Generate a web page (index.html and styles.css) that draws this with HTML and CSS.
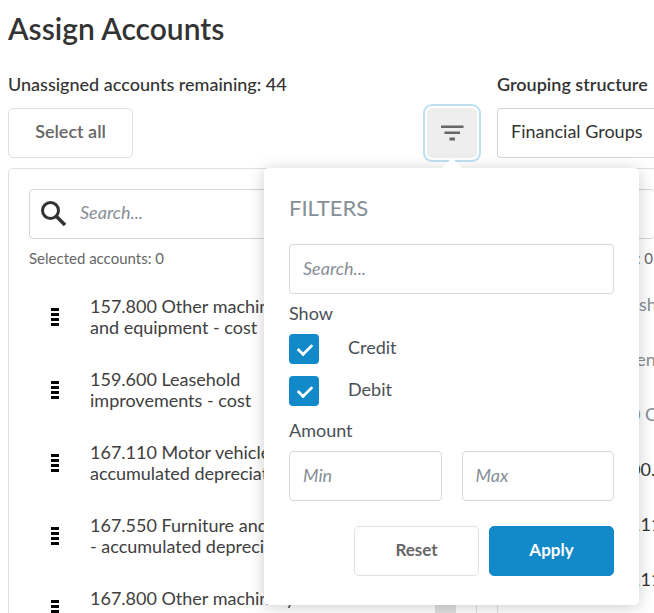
FILE: index.html
```html
<!DOCTYPE html>
<html lang="en">
<head>
<meta charset="utf-8">
<title>Assign Accounts</title>
<link rel="stylesheet" href="styles.css">
</head>
<body>
<main class="page">
  <h1 class="title">Assign Accounts</h1>
  <div class="columns">
    <section class="column">
      <h2 class="heading">Unassigned accounts remaining: 44</h2>
      <div class="toolbar">
        <button type="button" class="button">Select all</button>
        <div class="filter">
          <button type="button" class="filter-toggle" aria-label="Filters" aria-expanded="true">
            <svg width="24" height="24" viewBox="0 0 24 24" aria-hidden="true"><path fill="#666" d="M1 4.500h22.500v2.500H1zM4.500 10.500h15.500v2.500H4.500zM9.500 16.500h5.500v3H9.500z"/></svg>
          </button>
          <form class="popover">
            <h2 class="popover-title">FILTERS</h2>
            <input class="input" type="text" placeholder="Search..." aria-label="Search filters">
            <fieldset class="group">
              <legend class="label">Show</legend>
              <label class="check"><input class="checkbox" type="checkbox" checked><span class="check-text">Credit</span></label>
              <label class="check"><input class="checkbox" type="checkbox" checked><span class="check-text">Debit</span></label>
            </fieldset>
            <fieldset class="group">
              <legend class="label">Amount</legend>
              <div class="range">
                <input class="input" type="text" placeholder="Min" aria-label="Minimum amount">
                <input class="input" type="text" placeholder="Max" aria-label="Maximum amount">
              </div>
            </fieldset>
            <div class="actions">
              <button type="reset" class="button strong">Reset</button>
              <button type="submit" class="button strong primary">Apply</button>
            </div>
          </form>
        </div>
      </div>
      <div class="panel">
        <div class="search">
          <svg class="search-icon" width="28" height="28" viewBox="0 0 28 28" fill="none" stroke="#333" aria-hidden="true"><circle cx="10.500" cy="10.500" r="8" stroke-width="3"/><path d="M16 16L25 25" stroke-width="3.500"/></svg>
          <input class="search-input" type="text" placeholder="Search..." aria-label="Search accounts">
        </div>
        <p class="selected">Selected accounts: 0</p>
        <ul class="accounts">
          <li class="account"><span class="grip"></span><span class="name">157.800 Other machinery<br>and equipment - cost</span></li>
          <li class="account"><span class="grip"></span><span class="name">159.600 Leasehold<br>improvements - cost</span></li>
          <li class="account"><span class="grip"></span><span class="name">167.110 Motor vehicles -<br>accumulated depreciation</span></li>
          <li class="account"><span class="grip"></span><span class="name">167.550 Furniture and<br>- accumulated depreciation</span></li>
          <li class="account"><span class="grip"></span><span class="name">167.800 Other machinery<br>and equip. - accumulated</span><span class="amount">1,000.00</span><span class="tag"></span></li>
        </ul>
      </div>
    </section>
    <section class="column">
      <h2 class="heading"><label for="structure">Grouping structure</label></h2>
      <div class="toolbar">
        <select class="select" id="structure"><option>Financial Groups</option></select>
      </div>
      <div class="panel open">
        <div class="search open"></div>
        <p class="selected">Selected accounts: 0</p>
        <ul class="groups">
          <li class="muted">ash</li>
          <li class="muted">rent</li>
          <li class="muted">0 C</li>
          <li>00.</li>
          <li>111</li>
          <li>111</li>
        </ul>
      </div>
    </section>
  </div>
</main>
</body>
</html>
```
FILE: styles.css
```css
* { box-sizing: border-box; }

body {
  margin: 0;
  height: 100vh;
  overflow: hidden;
  background: #fff;
  color: #333;
  font: 400 18px/21px Lato, "Liberation Sans", sans-serif;
}

h1, h2, p, ul, fieldset { margin: 0; padding: 0; border: 0; }
h1, h2 { font-weight: 600; }
ul { list-style: none; }
button, input, select { font: inherit; color: inherit; }

.page { padding: 8px 0 0 8px; }
.title { font-size: 30px; line-height: 40px; }

.columns {
  display: grid;
  grid-template-columns: minmax(0, 469fr) minmax(0, 157fr);
  column-gap: 20px;
  margin-top: 24px;
}
.heading { font-size: 18px; font-weight: 500; line-height: 24px; white-space: nowrap; }
.column + .column .heading { font-weight: 600; }
.toolbar {
  display: flex;
  justify-content: space-between;
  margin: 12px 0 10px;
}

.button {
  width: 125px;
  height: 50px;
  padding: 0 0 4px;
  border: 1px solid #e0e0e0;
  border-radius: 5px;
  background: #fff;
  color: #666;
  font-weight: 600;
}
.button.strong { font-size: 17px; font-weight: 700; }
.button.primary {
  border-color: #1289c9;
  background: #1289c9;
  color: #fff;
}

.filter { position: relative; }
.filter-toggle {
  display: flex;
  align-items: center;
  justify-content: center;
  width: 50px;
  height: 50px;
  padding: 0;
  border: 0;
  border-radius: 5px;
  background: #eee;
  box-shadow: 0 0 0 2px #fff, 0 0 0 4px #bfe0f3;
}

.popover {
  position: absolute;
  z-index: 1;
  top: 60px;
  right: -162px;
  width: 375px;
  padding: 24px 25px 29px;
  border-radius: 5px;
  background: #fff;
  box-shadow: 0 2px 16px rgba(0, 0, 0, .2);
}
.popover::before {
  content: "";
  position: absolute;
  top: -10px;
  left: 178px;
  border: 10px solid transparent;
  border-top: 0;
  border-bottom-color: #fff;
}
.popover-title {
  margin-bottom: 20px;
  color: #868e96;
  font-size: 22px;
  font-weight: 400;
  line-height: 32px;
}
.input {
  display: block;
  width: 100%;
  min-width: 0;
  height: 50px;
  padding: 0 13px 3px;
  border: 1px solid #d5dae0;
  border-radius: 4px;
  background: #fff;
}
::placeholder { color: #868e96; font-style: italic; opacity: 1; }

.label { line-height: 24px; color: #495057; }
.group .label { padding: 7px 0 9px; }
.group + .group .label { padding: 0 0 9px; }
.check {
  display: flex;
  align-items: center;
  gap: 29px;
  margin-bottom: 12px;
  color: #495057;
}
.check-text { padding-bottom: 4px; }
.checkbox {
  appearance: none;
  width: 30px;
  height: 30px;
  margin: 0;
  border-radius: 4px;
  background: #1289c9;
}
.checkbox::before {
  content: "";
  display: block;
  width: 14px;
  height: 8px;
  margin: 9px 8px;
  border: solid #fff;
  border-width: 0 0 3px 3px;
  transform: rotate(-45deg) scale(.9);
}
.range { display: grid; grid-template-columns: 1fr 1fr; gap: 20px; }
.actions {
  display: flex;
  justify-content: flex-end;
  gap: 10px;
  margin-top: 25px;
}

.panel {
  padding: 20px;
  border: 1px solid #e0e0e0;
  border-radius: 5px;
}
.panel.open { padding-right: 0; }
.open { border-right: 0; border-radius: 5px 0 0 5px; }
.search {
  display: flex;
  align-items: center;
  height: 50px;
  padding-left: 10px;
  border: 1px solid #d0d5da;
  border-radius: 4px;
}
.search.open { border-right: 0; }
.search-input {
  flex: 1;
  min-width: 0;
  padding: 0 12px 3px;
  border: 0;
  background: none;
}
.checkbox::before {
  width: 13px;
  height: 7px;
}
.selected {
  margin-top: 7px;
  color: #666;
  font-size: 15px;
  line-height: 24px;
  white-space: nowrap;
}
.accounts { margin-top: 10px; color: #404040; white-space: nowrap; }
.account {
  display: flex;
  align-items: center;
  height: 73px;
  padding-left: 22px;
}
.grip {
  width: 8px;
  height: 18px;
  margin-right: 31px;
  background: repeating-linear-gradient(#000 0 3px, transparent 3px 5px);
}
.name { width: 210px; }
.amount { margin-left: auto; padding-top: 22px; color: #0f6fa5; font-size: 17px; font-weight: 600; }
.tag { width: 21px; height: 42px; margin-left: 13px; background: #e0e0e0; }

.select {
  width: 100%;
  height: 50px;
  padding: 0 0 3px 13px;
  border: 1px solid #d0d5da;
  border-right: 0;
  border-radius: 4px 0 0 4px;
  background: #fff;
  appearance: none;
}
.groups {
  padding: 7px 0 0 112px;
  line-height: 55px;
  white-space: nowrap;
}
.muted { color: #868e96; }
```
